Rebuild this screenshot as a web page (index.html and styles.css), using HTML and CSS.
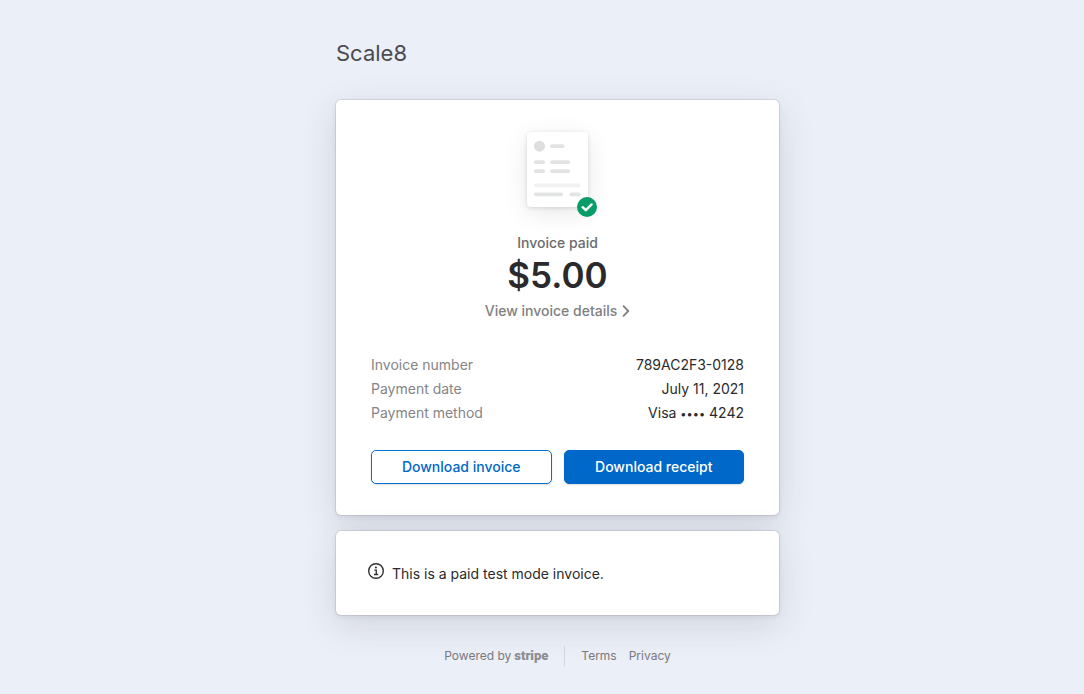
FILE: index.html
```html
<!DOCTYPE html>
<html lang="en">
<head>
<meta charset="utf-8">
<meta name="viewport" content="width=device-width, initial-scale=1">
<title>Scale8 invoice</title>
<link rel="stylesheet" href="styles.css">
</head>
<body>
<div class="page">
  <header class="merchant">Scale8</header>
  <main class="cards">
    <section class="card invoice">
      <svg class="invoice-art" width="115" height="120" viewBox="0 0 115 120" aria-hidden="true">
        <defs>
          <filter id="soft" x="-60%" y="-60%" width="220%" height="220%"><feGaussianBlur stdDeviation="13"/></filter>
          <filter id="tight" x="-20%" y="-20%" width="140%" height="140%"><feGaussianBlur stdDeviation="2"/></filter>
        </defs>
        <rect x="27" y="28" width="61" height="75" rx="4" fill="#000" opacity=".09" filter="url(#soft)"/>
        <rect x="27" y="23" width="61" height="75" rx="4" fill="#000" opacity=".13" filter="url(#tight)"/>
        <rect x="27" y="22" width="61" height="75" rx="4" fill="#fff"/>
        <circle cx="39.500" cy="36.200" r="5.500" fill="#dedede"/>
        <g fill="#e2e3e3">
          <rect x="50" y="34.300" width="14.500" height="3.700" rx="1.850"/>
          <rect x="34" y="50.300" width="11" height="3.700" rx="1.850"/>
          <rect x="50" y="50.300" width="20" height="3.700" rx="1.850"/>
          <rect x="34" y="59.300" width="11" height="3.700" rx="1.850"/>
          <rect x="50" y="59.300" width="20" height="3.700" rx="1.850"/>
          <rect x="34" y="82.500" width="29" height="3.700" rx="1.850"/>
          <rect x="69.500" y="82.500" width="11" height="3.700" rx="1.850"/>
        </g>
        <rect x="34" y="73.500" width="46.500" height="3.700" rx="1.850" fill="#f1f1f1"/>
        <circle cx="87" cy="97" r="10" fill="#079c68"/>
        <path d="M82.600 97.200l3.200 3 5.800-5.800" fill="none" stroke="#fff" stroke-width="2.400" stroke-linecap="round" stroke-linejoin="round"/>
      </svg>
      <p class="status">Invoice paid</p>
      <h1 class="amount">$5.00</h1>
      <a class="details-link" href="#">View invoice details
        <svg width="8" height="12" viewBox="0 0 8 12" aria-hidden="true"><path d="M1.500 1.200L6.300 6l-4.800 4.800" fill="none" stroke="currentColor" stroke-width="1.800" stroke-linecap="round" stroke-linejoin="round"/></svg>
      </a>
      <dl class="facts">
        <div class="fact"><dt>Invoice number</dt><dd>789AC2F3-0128</dd></div>
        <div class="fact"><dt>Payment date</dt><dd>July 11, 2021</dd></div>
        <div class="fact"><dt>Payment method</dt><dd>Visa <span class="mask">••••</span> 4242</dd></div>
      </dl>
      <div class="actions">
        <button class="button" type="button">Download invoice</button>
        <button class="button primary" type="button">Download receipt</button>
      </div>
    </section>
    <section class="card notice">
      <svg width="16" height="16" viewBox="0 0 16 16" aria-hidden="true">
        <circle cx="8" cy="8" r="7.300" fill="none" stroke="#303032" stroke-width="1.400"/>
        <circle cx="7.900" cy="4.500" r="1.050" fill="#303032"/>
        <path d="M6.300 7.200h2v4.300M6 11.500h4.200" fill="none" stroke="#303032" stroke-width="1.300"/>
      </svg>
      <p class="notice-text">This is a paid test mode invoice.</p>
    </section>
  </main>
  <footer class="footer">
    <a class="powered" href="#">Powered by <span class="stripe">stripe</span></a>
    <nav class="legal"><a href="#">Terms</a><a href="#">Privacy</a></nav>
  </footer>
</div>
</body>
</html>
```
FILE: styles.css
```css
* { box-sizing: border-box; }
body {
  margin: 0;
  padding: 36px 0 24px 31px;
  background: #ebeff7;
  color: #2a2a2c;
  font: 14px/24px Inter, "Liberation Sans", sans-serif;
}
p, h1, dl, dd { margin: 0; }
a { color: inherit; text-decoration: none; }
.page { max-width: 443px; margin: 0 auto; }
.merchant { color: #4b4b4f; font-size: 22px; line-height: 34px; }
.cards { display: grid; gap: 16px; margin-top: 30px; }
.card {
  background: #fff;
  border-radius: 5px;
  box-shadow: 0 0 0 1px rgba(50, 50, 75, .1), 0 2px 5px rgba(50, 50, 70, .08), 0 10px 36px rgba(50, 50, 70, .14);
}
.invoice { display: flex; flex-direction: column; align-items: center; padding: 10px 35px 31px; }
.status { margin-top: 1px; color: #6b6b6d; font-weight: 500; }
.amount { font-size: 35px; line-height: 40px; font-weight: 600; }
.details-link { display: flex; align-items: center; gap: 5px; margin-top: 4px; color: #808082; font-weight: 500; }
.facts { width: 100%; margin-top: 30px; }
.fact { display: flex; justify-content: space-between; }
.fact dt { color: #858587; }
.mask { font-size: 11px; line-height: 1; }
.actions { display: grid; grid-template-columns: 1fr 1fr; gap: 12px; width: 100%; margin-top: 25px; }
.button {
  height: 34px;
  padding: 0 12px;
  border: 1px solid #0570d0;
  border-radius: 5px;
  background: #fff;
  color: #0068c9;
  font: inherit;
  font-weight: 500;
  box-shadow: 0 1px 2px rgba(0, 0, 0, .14);
}
.primary { border-color: #0068c9; background: #0068c9; color: #fff; }
.notice { display: flex; align-items: flex-start; gap: 8px; padding: 32px 32px 31px; }
.notice-text { line-height: 20px; padding-top: 1px; }
.footer { display: flex; justify-content: center; margin-top: 31px; color: #79797d; font-size: 12px; line-height: 20px; }
.powered { display: flex; gap: 3px; padding-right: 16px; }
.stripe { color: #8d8d92; font: 900 13px/20px Roboto, sans-serif; }
.legal { display: flex; gap: 12px; padding-left: 16px; border-left: 1px solid #d2d4de; }
```
